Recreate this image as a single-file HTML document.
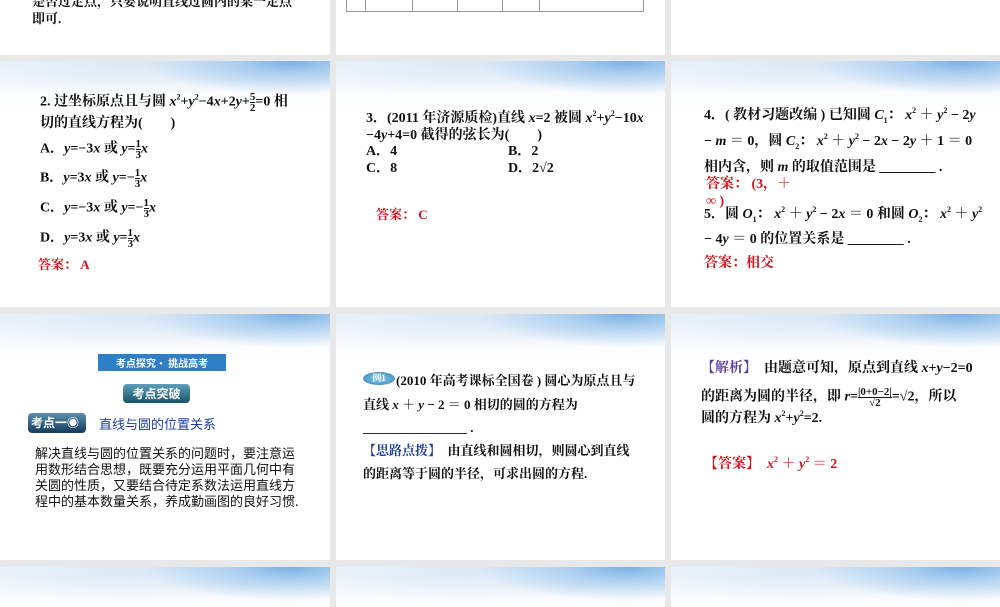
<!DOCTYPE html>
<html><head><meta charset="utf-8"><style>
body{margin:0;width:1000px;height:600px;background:#e8e8e8;position:relative;overflow:hidden;font-family:"Liberation Serif","Noto Serif CJK SC","Noto Sans CJK SC",serif;font-weight:bold;color:#111}
.s{position:absolute;background:#fff;overflow:hidden}
.hd{position:absolute;left:0;top:0;right:0;height:48px;background:radial-gradient(ellipse 45% 70% at 88% 0%,#79b0e4 0%,#a9cdee 35%,rgba(255,255,255,0) 100%),radial-gradient(ellipse 60% 60% at 40% 10%,#dbe9f6 0%,rgba(255,255,255,0) 100%),linear-gradient(#eef5fb,#fff)}
.t{position:absolute;font-size:14px;white-space:nowrap;line-height:16px}
.r{color:#d0141c}.b{color:#1c3f9c}.p{color:#5b3fa0}
i{font-style:italic}
.fr{display:inline-block;vertical-align:middle;text-align:center;font-size:11px;line-height:10px}
.fr span{display:block}
sup{font-size:8px;vertical-align:6px;line-height:0}
sub{font-size:8px}
</style></head><body>
<!-- row 0 -->
<div class="s" style="left:0;top:0;width:330px;height:55px">
<div class="t" style="left:32px;top:-6px;font-size:13px">是否过定点，只要说明直线过圆内的某一定点</div>
<div class="t" style="left:32px;top:11px;font-size:13px">即可.</div></div>
<div class="s" style="left:336px;top:0;width:329px;height:55px">
<div style="position:absolute;left:10px;top:-2px;width:296px;height:13px;border:1px solid #999;border-top:none"></div>
<div style="position:absolute;left:29px;top:0;width:1px;height:12px;background:#999"></div>
<div style="position:absolute;left:76px;top:0;width:1px;height:12px;background:#999"></div>
<div style="position:absolute;left:121px;top:0;width:1px;height:12px;background:#999"></div>
<div style="position:absolute;left:166px;top:0;width:1px;height:12px;background:#999"></div>
<div style="position:absolute;left:203px;top:0;width:1px;height:12px;background:#999"></div>
</div>
<div class="s" style="left:671px;top:0;width:329px;height:55px"></div>
<!-- row 1 -->
<div class="s" style="left:0;top:61px;width:330px;height:246px"><div class="hd"></div>
<div class="t" style="left:40px;top:31px">2. 过坐标原点且与圆 <i>x</i><sup>2</sup>+<i>y</i><sup>2</sup>−4<i>x</i>+2<i>y</i>+<span class="fr"><span>5</span><span style="border-top:1px solid #111">2</span></span>=0 相</div>
<div class="t" style="left:40px;top:55px">切的直线方程为(　　)</div>
<div class="t" style="left:40px;top:78px">A．<i>y</i>=−3<i>x</i> 或 <i>y</i>=<span class="fr"><span>1</span><span style="border-top:1px solid #111">3</span></span><i>x</i></div>
<div class="t" style="left:40px;top:107px">B．<i>y</i>=3<i>x</i> 或 <i>y</i>=−<span class="fr"><span>1</span><span style="border-top:1px solid #111">3</span></span><i>x</i></div>
<div class="t" style="left:40px;top:137px">C．<i>y</i>=−3<i>x</i> 或 <i>y</i>=−<span class="fr"><span>1</span><span style="border-top:1px solid #111">3</span></span><i>x</i></div>
<div class="t" style="left:40px;top:167px">D．<i>y</i>=3<i>x</i> 或 <i>y</i>=<span class="fr"><span>1</span><span style="border-top:1px solid #111">3</span></span><i>x</i></div>
<div class="t r" style="left:38px;top:196px;font-size:13px">答案：  A</div></div>
<div class="s" style="left:336px;top:61px;width:329px;height:246px"><div class="hd"></div>
<div class="t" style="left:30px;top:50px">3．(2011 年济源质检)直线 <i>x</i>=2 被圆 <i>x</i><sup>2</sup>+<i>y</i><sup>2</sup>−10<i>x</i></div>
<div class="t" style="left:30px;top:67px">−4<i>y</i>+4=0 截得的弦长为(　　)</div>
<div class="t" style="left:30px;top:83px">A．4</div><div class="t" style="left:172px;top:83px">B．2</div>
<div class="t" style="left:30px;top:100px">C．8</div><div class="t" style="left:172px;top:100px">D．2√2</div>
<div class="t r" style="left:40px;top:146px;font-size:13px">答案：  C</div></div>
<div class="s" style="left:671px;top:61px;width:329px;height:246px"><div class="hd"></div>
<div class="t" style="left:33px;top:47px">4．( 教材习题改编 ) 已知圆 <i>C</i><sub>1</sub>：  <i>x</i><sup>2</sup> ＋ <i>y</i><sup>2</sup> − 2<i>y</i></div>
<div class="t" style="left:33px;top:73px">− <i>m</i> ＝ 0，圆 <i>C</i><sub>2</sub>：  <i>x</i><sup>2</sup> ＋ <i>y</i><sup>2</sup> − 2<i>x</i> − 2<i>y</i> ＋ 1 ＝ 0</div>
<div class="t" style="left:33px;top:99px">相内含，则 <i>m</i> 的取值范围是 ________ .</div>
<div class="t r" style="left:35px;top:116px">答案：  (3，＋</div>
<div class="t r" style="left:35px;top:133px">∞ )</div>
<div class="t" style="left:33px;top:146px">5．圆 <i>O</i><sub>1</sub>：  <i>x</i><sup>2</sup> ＋ <i>y</i><sup>2</sup> − 2<i>x</i> ＝ 0 和圆 <i>O</i><sub>2</sub>：  <i>x</i><sup>2</sup> ＋ <i>y</i><sup>2</sup></div>
<div class="t" style="left:33px;top:171px">− 4<i>y</i> ＝ 0 的位置关系是 ________ .</div>
<div class="t r" style="left:33px;top:195px">答案：相交</div></div>
<!-- row 2 -->
<div class="s" style="left:0;top:314px;width:330px;height:246px"><div class="hd"></div>
<div style="position:absolute;left:98px;top:40px;width:128px;height:17px;background:#2f7fc8;color:#fff;font-size:10px;line-height:17px;text-align:center;font-family:'Noto Sans CJK SC',sans-serif">考点探究• 挑战高考</div>
<div style="position:absolute;left:123px;top:70px;width:67px;height:19px;border-radius:4px;background:linear-gradient(#5b9fb8,#1b5468);color:#fff;font-size:12px;line-height:19px;text-align:center;font-family:'Noto Sans CJK SC',sans-serif">考点突破</div>
<div style="position:absolute;left:28px;top:99px;width:55px;height:20px;border-radius:4px;background:linear-gradient(#5a8fae,#163a5a);color:#fff;font-size:12px;line-height:20px;padding-left:3px;font-family:'Noto Sans CJK SC',sans-serif">考点一◉</div>
<div class="t b" style="left:99px;top:102px;font-size:13px;font-weight:normal;font-family:'Noto Sans CJK SC',sans-serif">直线与圆的位置关系</div>
<div class="t" style="left:35px;top:131px;font-size:13px;line-height:16px;font-weight:normal;font-family:'Noto Sans CJK SC',sans-serif">解决直线与圆的位置关系的问题时，要注意运<br>用数形结合思想，既要充分运用平面几何中有<br>关圆的性质，又要结合待定系数法运用直线方<br>程中的基本数量关系，养成勤画图的良好习惯.</div></div>
<div class="s" style="left:336px;top:314px;width:329px;height:246px"><div class="hd"></div>
<div style="position:absolute;left:27px;top:58px;width:32px;height:13px;border-radius:50%;background:radial-gradient(#8fd0ee,#2a7fb0);color:#fff;font-size:9px;line-height:13px;text-align:center">例1</div>
<div class="t" style="left:60px;top:59px;font-size:13px">(2010 年高考课标全国卷 ) 圆心为原点且与</div>
<div class="t" style="left:27px;top:83px;font-size:13px">直线 <i>x</i> ＋ <i>y</i> − 2 ＝ 0 相切的圆的方程为</div>
<div class="t" style="left:27px;top:106px;font-size:13px">________________ .</div>
<div class="t" style="left:27px;top:129px;font-size:13px"><span class="b">【思路点拨】</span>　由直线和圆相切，则圆心到直线</div>
<div class="t" style="left:27px;top:152px;font-size:13px">的距离等于圆的半径，可求出圆的方程.</div></div>
<div class="s" style="left:671px;top:314px;width:329px;height:246px"><div class="hd"></div>
<div class="t" style="left:30px;top:47px"><span class="p">【解析】</span>　由题意可知，原点到直线 <i>x</i>+<i>y</i>−2=0</div>
<div class="t" style="left:30px;top:73px">的距离为圆的半径，即 <i>r</i>=<span class="fr"><span>|0+0−2|</span><span style="border-top:1px solid #111">√2</span></span>=√2，所以</div>
<div class="t" style="left:30px;top:97px">圆的方程为 <i>x</i><sup>2</sup>+<i>y</i><sup>2</sup>=2.</div>
<div class="t r" style="left:33px;top:143px">【答案】　<i>x</i><sup>2</sup> ＋ <i>y</i><sup>2</sup> ＝ 2</div></div>
<!-- row 3 -->
<div class="s" style="left:0;top:567px;width:330px;height:40px"><div class="hd"></div></div>
<div class="s" style="left:336px;top:567px;width:329px;height:40px"><div class="hd"></div></div>
<div class="s" style="left:671px;top:567px;width:329px;height:40px"><div class="hd"></div></div>
</body></html>
